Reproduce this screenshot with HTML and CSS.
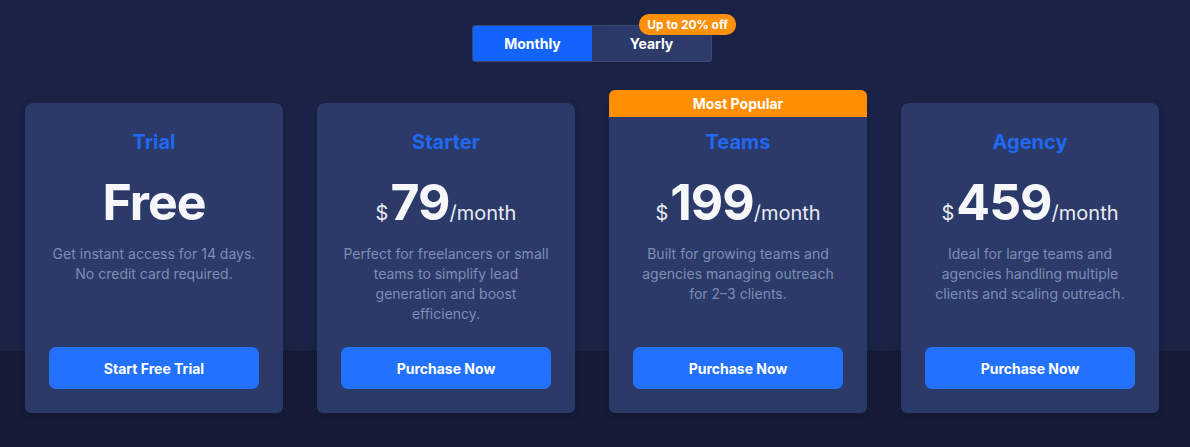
FILE: index.html
```html
<!DOCTYPE html>
<html lang="en">
<head>
<meta charset="utf-8">
<title>Pricing</title>
<link rel="stylesheet" href="styles.css">
</head>
<body>
<div class="page">
  <div class="toggle-wrap">
    <div class="toggle">
      <button class="tab tab-active">Monthly</button>
      <button class="tab">Yearly</button>
      <span class="badge">Up to 20% off</span>
    </div>
  </div>
  <div class="plans">
    <div class="card">
      <h3 class="plan-name">Trial</h3>
      <div class="price"><span class="amount">Free</span></div>
      <p class="desc">Get instant access for 14 days.<br>No credit card required.</p>
      <button class="cta">Start Free Trial</button>
    </div>
    <div class="card">
      <h3 class="plan-name">Starter</h3>
      <div class="price"><span class="cur">$</span><span class="amount">79</span><span class="per">/month</span></div>
      <p class="desc">Perfect for freelancers or small teams to simplify lead generation and boost efficiency.</p>
      <button class="cta">Purchase Now</button>
    </div>
    <div class="card card-popular">
      <div class="ribbon">Most Popular</div>
      <h3 class="plan-name">Teams</h3>
      <div class="price"><span class="cur">$</span><span class="amount">199</span><span class="per">/month</span></div>
      <p class="desc">Built for growing teams and agencies managing outreach for 2–3 clients.</p>
      <button class="cta">Purchase Now</button>
    </div>
    <div class="card">
      <h3 class="plan-name">Agency</h3>
      <div class="price"><span class="cur">$</span><span class="amount">459</span><span class="per">/month</span></div>
      <p class="desc">Ideal for large teams and agencies handling multiple clients and scaling outreach.</p>
      <button class="cta">Purchase Now</button>
    </div>
  </div>
</div>
</body>
</html>
```

FILE: styles.css
```css
* { box-sizing: border-box; }
html, body { margin: 0; padding: 0; }
body {
  font-family: Inter, "Noto Sans", "Liberation Sans", sans-serif;
  background: linear-gradient(to bottom, #1a2346 0, #1a2346 351px, #161c38 351px, #161c38 100%);
  height: 447px;
  overflow: hidden;
  color: #fff;
}
.page {
  padding: 25px 31px 0 25px;
}
.toggle-wrap {
  display: flex;
  justify-content: center;
}
.toggle {
  position: relative;
  display: flex;
  width: 240px;
  height: 37px;
  border: 1px solid #3a4776;
  border-radius: 3px;
  background: linear-gradient(90deg, #283563, #2e3c6c);
}
.tab {
  flex: 1;
  border: 0;
  background: transparent;
  color: #fff;
  font-family: inherit;
  font-size: 14px;
  font-weight: 700;
  cursor: pointer;
  padding: 0;
}
.tab-active {
  background: #1364ff;
  border-radius: 2px 0 0 2px;
}
.badge {
  position: absolute;
  top: -12px;
  right: -25px;
  height: 21px;
  padding: 0 8px;
  border-radius: 10px;
  background: #ff900a;
  color: #fff;
  font-size: 12px;
  font-weight: 700;
  line-height: 21px;
  white-space: nowrap;
}
.plans {
  display: grid;
  grid-template-columns: repeat(4, 258px);
  column-gap: 34px;
  margin-top: 41px;
}
.card {
  position: relative;
  display: flex;
  flex-direction: column;
  align-items: center;
  height: 310px;
  padding: 27px 24px 24px;
  background: #2b3a68;
  border-radius: 8px 8px 6px 6px;
  box-shadow: 0 2px 6px rgba(8, 12, 30, 0.25);
  text-align: center;
}
.card-popular {
  border-radius: 0 0 6px 6px;
}
.ribbon {
  position: absolute;
  left: 0;
  right: 0;
  top: -13px;
  height: 27px;
  background: #ff8f00;
  border-radius: 6px 6px 0 0;
  color: #fff;
  font-size: 14px;
  font-weight: 700;
  line-height: 27px;
}
.plan-name {
  margin: 0;
  font-size: 20px;
  line-height: 24px;
  font-weight: 700;
  color: #2168f2;
}
.price {
  display: flex;
  align-items: baseline;
  justify-content: center;
  margin-top: 18px;
  height: 60px;
  line-height: 60px;
}
.amount {
  font-size: 50px;
  font-weight: 700;
  color: #f6f7fb;
  letter-spacing: -1px;
}
.cur {
  font-size: 20px;
  color: #e9ecf5;
  margin-right: 2px;
}
.per {
  font-size: 20px;
  color: #e9ecf5;
  margin-left: 0;
}
.desc {
  margin: 12px 0 0;
  font-size: 14px;
  line-height: 20px;
  color: #7f8db6;
  padding: 0 2px;
}
.cta {
  margin-top: auto;
  width: 210px;
  height: 42px;
  border: 0;
  border-radius: 7px;
  background: #2371ff;
  color: #fff;
  font-family: inherit;
  font-size: 14px;
  font-weight: 700;
  cursor: pointer;
}
```
